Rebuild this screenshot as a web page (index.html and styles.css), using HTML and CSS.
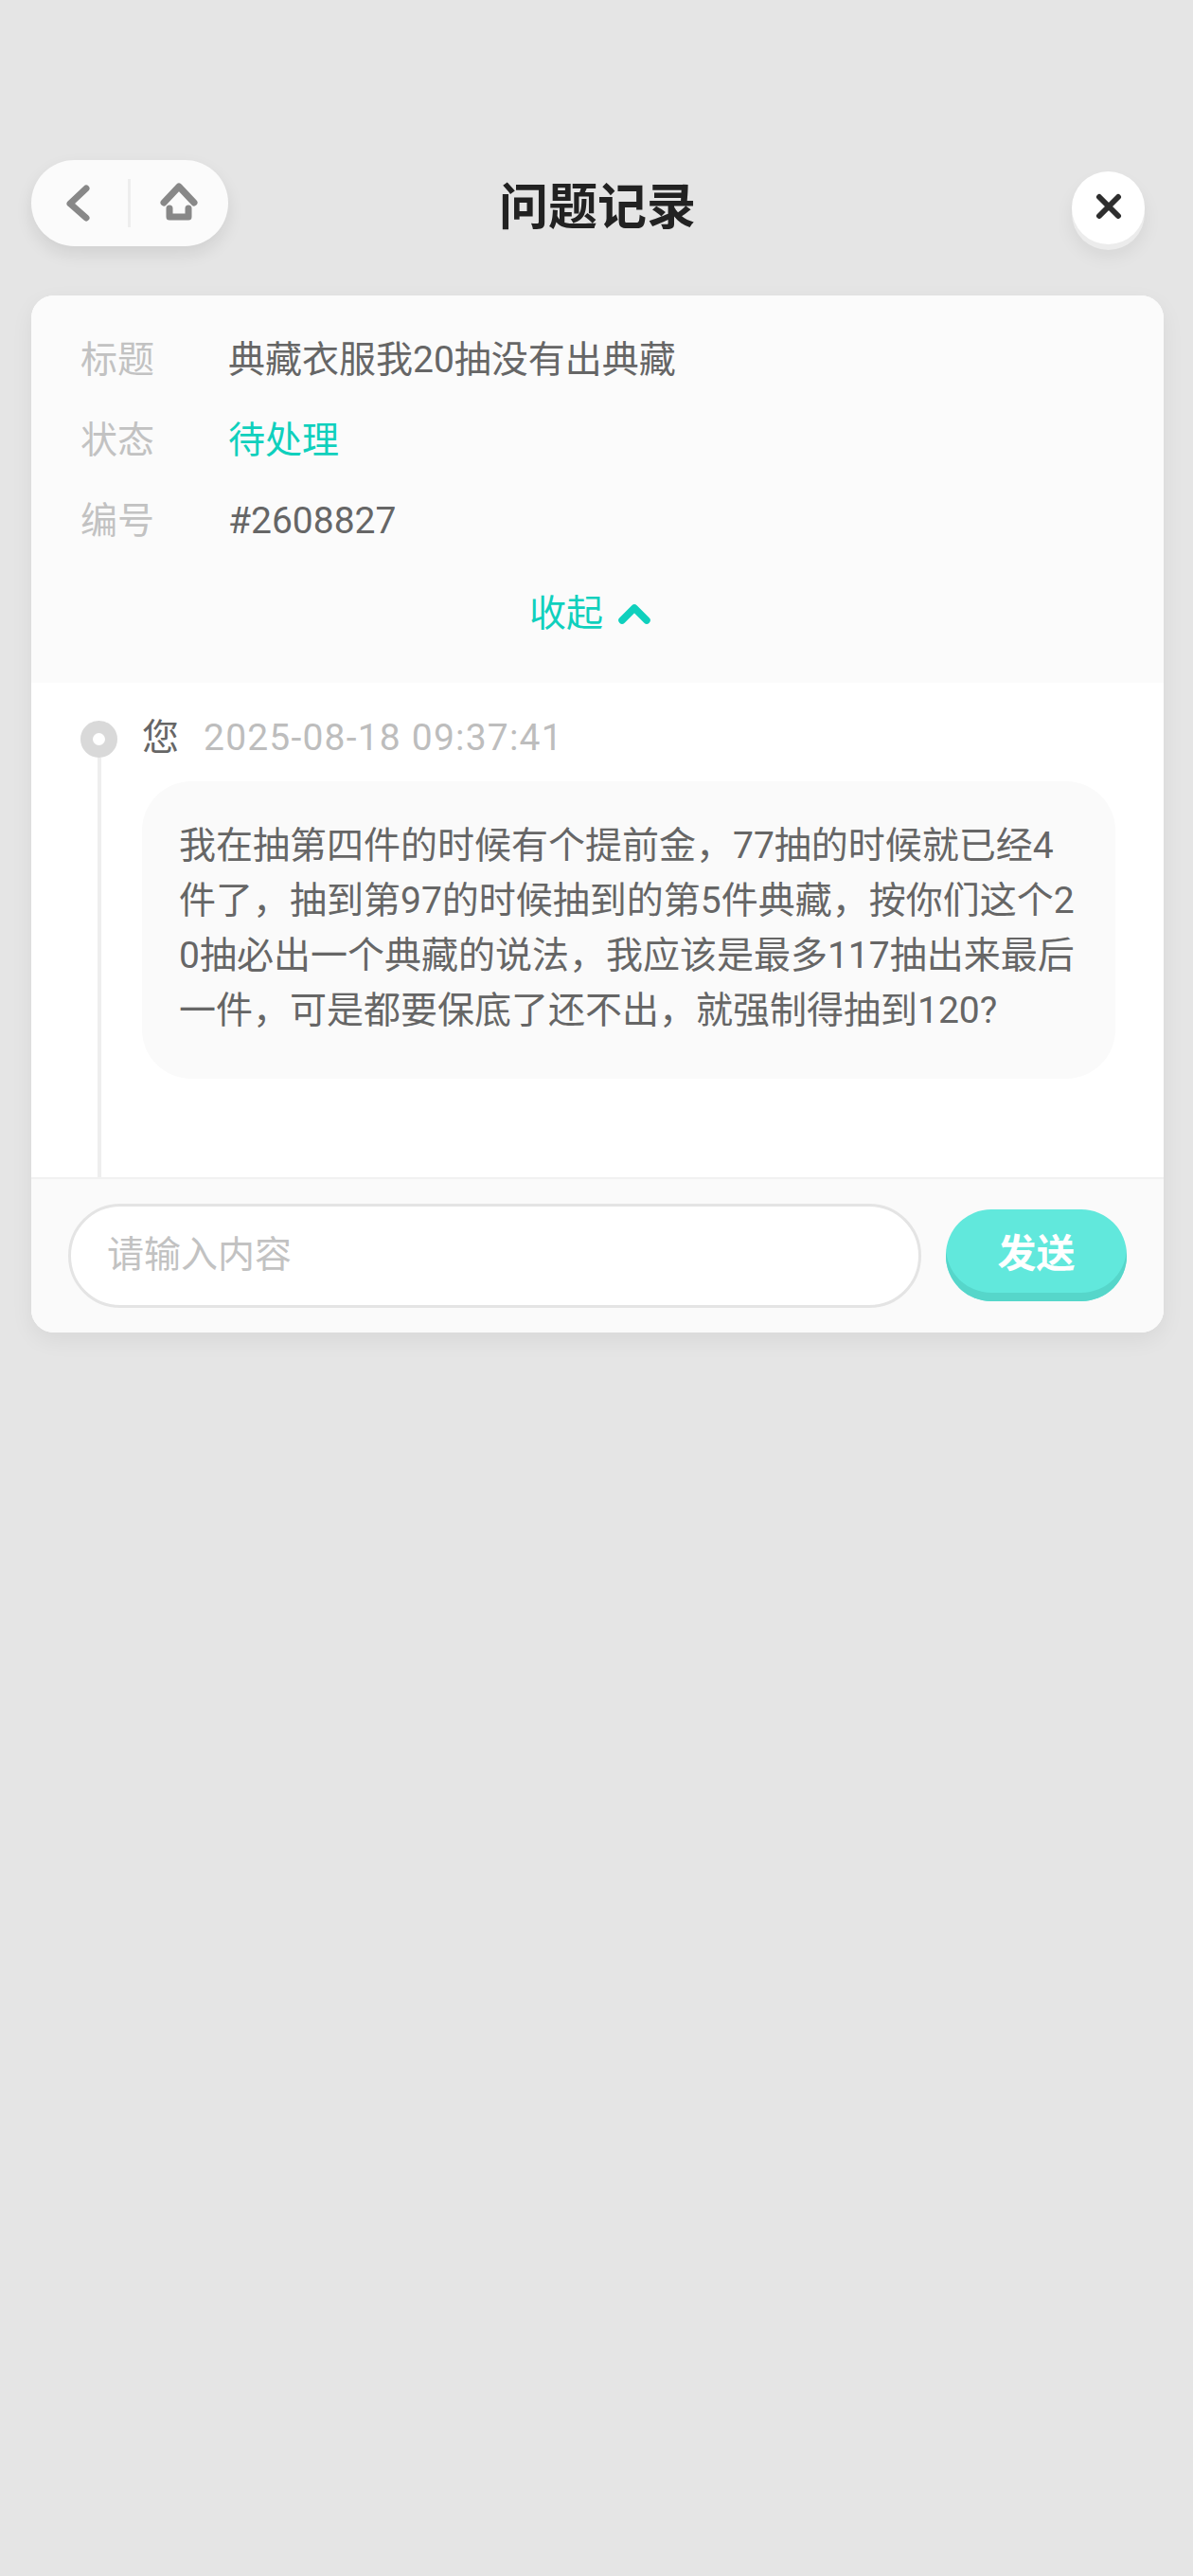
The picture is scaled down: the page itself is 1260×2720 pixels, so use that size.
FILE: index.html
```html
<!DOCTYPE html>
<html lang="zh-CN">
<head>
    <meta charset="UTF-8">
    <meta name="viewport" content="width=device-width, initial-scale=1.0">
    <title>问题记录</title>
    <link rel="stylesheet" href="styles.css">
</head>
<body>
    <div class="page">
        <header class="top">
            <div class="nav-pill">
                <button class="nav-btn">
                    <svg width="36" height="48" viewBox="0 0 36 48"><path class="icon-line" d="M26 8 L9 24 L26 39"/></svg>
                </button>
                <span class="nav-divider"></span>
                <button class="nav-btn">
                    <svg width="48" height="48" viewBox="0 0 48 48"><path class="icon-line" d="M8 23 L24 6 L40 23"/><path class="icon-line" d="M14 29 V38 H34 V29"/></svg>
                </button>
            </div>
            <h1 class="title">问题记录</h1>
            <button class="close-btn">
                <svg width="32" height="32" viewBox="0 0 32 32"><path class="icon-close" d="M6 4 L26 24 M26 4 L6 24"/></svg>
            </button>
        </header>

        <main class="card">
            <section class="info">
                <div class="info-row"><span class="info-label">标题</span><span class="info-value">典藏衣服我20抽没有出典藏</span></div>
                <div class="info-row"><span class="info-label">状态</span><span class="info-value teal">待处理</span></div>
                <div class="info-row"><span class="info-label">编号</span><span class="info-value">#2608827</span></div>
                <div class="collapse">
                    <span>收起</span>
                    <svg class="collapse-icon" width="36" height="24" viewBox="0 0 36 24"><path class="icon-teal" d="M5 19 L18 6 L31 19"/></svg>
                </div>
            </section>

            <section class="thread">
                <div class="rail">
                    <span class="dot"></span>
                    <span class="rail-line"></span>
                </div>
                <div class="entry">
                    <div class="entry-head">
                        <span class="who">您</span>
                        <span class="time">2025-08-18 09:37:41</span>
                    </div>
                    <div class="bubble">我在抽第四件的时候有个提前金，77抽的时候就已经4件了，抽到第97的时候抽到的第5件典藏，按你们这个20抽必出一个典藏的说法，我应该是最多117抽出来最后一件，可是都要保底了还不出，就强制得抽到120?</div>
                </div>
            </section>

            <footer class="composer">
                <div class="input-box">请输入内容</div>
                <button class="send-btn">发送</button>
            </footer>
        </main>
    </div>
</body>
</html>
```

FILE: styles.css
```css
* {
    box-sizing: border-box;
}
body {
    margin: 0;
    background-color: #e5e5e5;
    font-family: Roboto, "Noto Sans CJK SC", sans-serif;
    color: #666666;
}
button {
    padding: 0;
    border: none;
    background: none;
    font-family: inherit;
}
.page {
    min-height: 2720px;
    padding: 169px 31px 0 33px;
}

/* top bar */
.top {
    display: grid;
    grid-template-columns: 1fr auto 1fr;
    align-items: start;
    height: 143px;
}
.nav-pill {
    display: flex;
    align-items: center;
    justify-content: space-between;
    width: 208px;
    height: 91px;
    padding: 0 28px 0 32px;
    background-color: #fbfbfb;
    border-radius: 46px;
    box-shadow: 0 8px 18px rgba(0, 0, 0, 0.09);
}
.nav-btn {
    display: flex;
}
.nav-divider {
    width: 3px;
    height: 51px;
    margin-left: 6px;
    background-color: #eeeeee;
}
.icon-line {
    fill: none;
    stroke: #888888;
    stroke-width: 7;
    stroke-linecap: round;
    stroke-linejoin: round;
}
.icon-close {
    fill: none;
    stroke: #2e2e2e;
    stroke-width: 6;
    stroke-linecap: round;
}
.icon-teal {
    fill: none;
    stroke: #0fd0bd;
    stroke-width: 7.5;
    stroke-linecap: round;
    stroke-linejoin: round;
}
.title {
    margin: 18px 0 0;
    font-size: 52px;
    line-height: 66px;
    font-weight: 700;
    color: #222222;
}
.close-btn {
    justify-self: end;
    display: flex;
    align-items: center;
    justify-content: center;
    width: 77px;
    height: 77px;
    margin: 12px 20px 0 0;
    background-color: #ffffff;
    border-radius: 50%;
    box-shadow: 0 6px 0 #ececec, 0 12px 20px rgba(0, 0, 0, 0.07);
}

/* card */
.card {
    height: 1095px;
    display: flex;
    flex-direction: column;
    background-color: #ffffff;
    border-radius: 24px;
    overflow: hidden;
    box-shadow: 0 8px 24px rgba(0, 0, 0, 0.06);
}
.info {
    height: 409px;
    padding: 26px 52px 0;
    background-color: #fbfbfb;
}
.info-row {
    display: flex;
    align-items: baseline;
    height: 85px;
    font-size: 39px;
    line-height: 85px;
}
.info-label {
    width: 156px;
    color: #c2c2c2;
}
.teal {
    color: #0fd0bd;
}
.collapse {
    display: flex;
    align-items: center;
    justify-content: center;
    gap: 15px;
    height: 56px;
    margin-top: 23px;
    padding-right: 15px;
    font-size: 39px;
    color: #0fd0bd;
}
.collapse-icon {
    margin-top: 8px;
}

/* thread */
.thread {
    flex: 1;
    display: flex;
    padding: 40px 51px 0 52px;
}
.rail {
    display: flex;
    flex-direction: column;
    align-items: center;
    width: 39px;
    margin-right: 26px;
}
.dot {
    flex: none;
    width: 39px;
    height: 39px;
    border: 13px solid #d9d9d9;
    background-color: #ffffff;
    border-radius: 50%;
}
.rail-line {
    flex: 1;
    width: 4px;
    background-color: #eeeeee;
}
.entry {
    flex: 1;
}
.entry-head {
    display: flex;
    align-items: center;
    gap: 26px;
    height: 37px;
    font-size: 39px;
    line-height: 37px;
}
.time {
    color: #bdbdbd;
    letter-spacing: 1.2px;
}
.bubble {
    height: 314px;
    margin-top: 27px;
    padding: 39px 39px 0;
    background-color: #fafafa;
    border-radius: 52px;
    font-size: 39px;
    line-height: 58px;
    word-break: break-all;
}

/* input bar */
.composer {
    display: flex;
    align-items: flex-start;
    justify-content: space-between;
    height: 164px;
    padding: 26px 39px 0;
    background-color: #fafafa;
    border-top: 2px solid #f1f1f1;
}
.input-box {
    width: 901px;
    height: 110px;
    padding-left: 38px;
    background-color: #ffffff;
    border: 3px solid #e4e4e4;
    border-radius: 55px;
    font-size: 39px;
    line-height: 103px;
    color: #c2c2c2;
}
.send-btn {
    width: 191px;
    height: 97px;
    margin-top: 6px;
    background-color: #61e8dc;
    border-radius: 48px;
    box-shadow: inset 0 -9px 0 #56d6ca;
    font-size: 41px;
    font-weight: 700;
    color: #ffffff;
    padding-bottom: 11px;
}
```
